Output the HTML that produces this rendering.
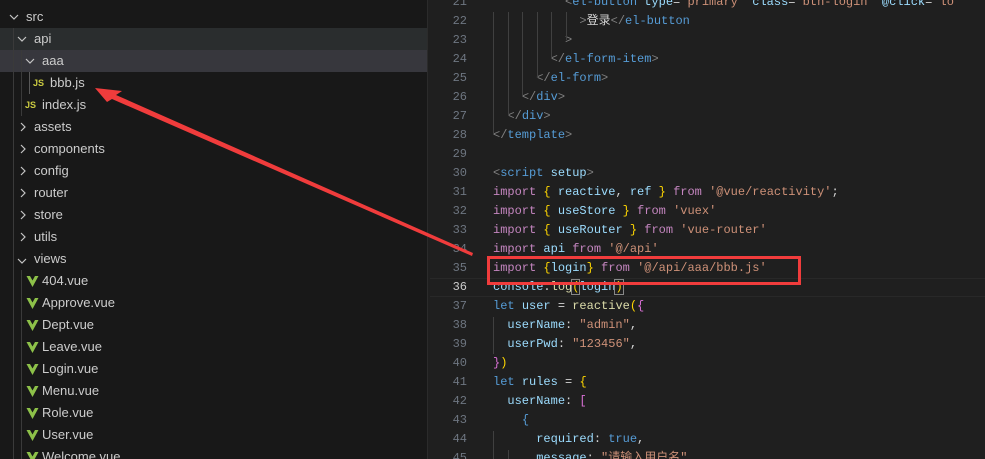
<!DOCTYPE html>
<html><head><meta charset="utf-8"><style>
*{margin:0;padding:0;box-sizing:border-box}
html,body{width:985px;height:459px;overflow:hidden}
body{background:#1f1f1f;position:relative;font-family:"Liberation Sans","Noto Sans CJK SC",sans-serif}
#side{position:absolute;left:0;top:0;width:428px;height:459px;background:#181818;border-right:1px solid #2b2b2b;overflow:hidden}
.r{position:absolute;left:0;width:427px;height:22px;line-height:22px;font-size:13px;color:#cccccc;white-space:nowrap}
.js{position:absolute;top:0;font-size:9px;font-weight:bold;color:#cbcb41}
.guide{position:absolute;width:1px;background:#3a3a3a}
#code{position:absolute;left:430px;top:-7px;width:555px;font-family:"Liberation Mono","Noto Sans CJK SC",monospace;font-size:12px}
.l{height:19px;line-height:19px;white-space:pre;position:relative;color:#d4d4d4}
.n{position:absolute;left:0;width:37px;text-align:right;color:#6e7681}
.t{position:absolute;left:63px}
.k{color:#c586c0}.b{color:#569cd6}.v{color:#9cdcfe}.s{color:#ce9178}.f{color:#dcdcaa}.y{color:#ffd700}.g{color:#808080}.p{color:#da70d6}
</style></head><body>
<div id="side">
<div class="r" style="top:6px"><span style="position:absolute;left:26px">src</span></div>
<div class="r" style="top:28px;background:#2a2d2e"><span style="position:absolute;left:34px">api</span></div>
<div class="r" style="top:50px;background:#37373d"><span style="position:absolute;left:42px">aaa</span></div>
<div class="r" style="top:72px"><span class="js" style="left:33px">JS</span><span style="position:absolute;left:50px">bbb.js</span></div>
<div class="r" style="top:94px"><span class="js" style="left:25px">JS</span><span style="position:absolute;left:42px">index.js</span></div>
<div class="r" style="top:116px"><span style="position:absolute;left:34px">assets</span></div>
<div class="r" style="top:138px"><span style="position:absolute;left:34px">components</span></div>
<div class="r" style="top:160px"><span style="position:absolute;left:34px">config</span></div>
<div class="r" style="top:182px"><span style="position:absolute;left:34px">router</span></div>
<div class="r" style="top:204px"><span style="position:absolute;left:34px">store</span></div>
<div class="r" style="top:226px"><span style="position:absolute;left:34px">utils</span></div>
<div class="r" style="top:248px"><span style="position:absolute;left:34px">views</span></div>
<div class="r" style="top:270px;left:42px">404.vue</div>
<div class="r" style="top:292px;left:42px">Approve.vue</div>
<div class="r" style="top:314px;left:42px">Dept.vue</div>
<div class="r" style="top:336px;left:42px">Leave.vue</div>
<div class="r" style="top:358px;left:42px">Login.vue</div>
<div class="r" style="top:380px;left:42px">Menu.vue</div>
<div class="r" style="top:402px;left:42px">Role.vue</div>
<div class="r" style="top:424px;left:42px">User.vue</div>
<div class="r" style="top:446px;left:42px">Welcome.vue</div>
<div class="guide" style="left:13px;top:28px;height:431px"></div>
<div class="guide" style="left:21px;top:50px;height:66px"></div>
<div class="guide" style="left:29px;top:72px;height:22px;background:#585858"></div>
<div class="guide" style="left:21px;top:270px;height:189px"></div>
<svg style="position:absolute;left:0;top:0" width="428" height="459">
<g fill="none" stroke="#c5c5c5" stroke-width="1.2">
<path d="M10 15l4 4 4-4"/><path d="M18 37l4 4 4-4"/><path d="M26 59l4 4 4-4"/><path d="M18 259l4 4 4-4"/>
<path d="M21 123l4 4-4 4"/><path d="M21 145l4 4-4 4"/><path d="M21 167l4 4-4 4"/><path d="M21 189l4 4-4 4"/><path d="M21 211l4 4-4 4"/><path d="M21 233l4 4-4 4"/>
</g>
<g fill="#8dc149">
<path id="v" d="M26.5 276h3.5l2.5 4.5 2.5-4.5h3.5l-6 11z"/>
<use href="#v" y="22"/><use href="#v" y="44"/><use href="#v" y="66"/><use href="#v" y="88"/><use href="#v" y="110"/><use href="#v" y="132"/><use href="#v" y="154"/><use href="#v" y="176"/>
</g>
</svg>
</div>
<div style="position:absolute;left:430px;top:278px;width:555px;height:19px;border-top:1px solid #282828;border-bottom:1px solid #282828"></div>
<div id="code">
<div class="l"><span class="n">21</span><span class="t">          <span class="g">&lt;</span><span class="b">el-button</span> <span class="v">type</span>=<span class="s">"primary"</span> <span class="v">class</span>=<span class="s">"btn-login"</span> <span class="v">@click</span>=<span class="s">"lo</span></span></div>
<div class="l"><span class="n">22</span><span class="t">            <span class="g">&gt;</span>登录<span class="g">&lt;/</span><span class="b">el-button</span></span></div>
<div class="l"><span class="n">23</span><span class="t">          <span class="g">&gt;</span></span></div>
<div class="l"><span class="n">24</span><span class="t">        <span class="g">&lt;/</span><span class="b">el-form-item</span><span class="g">&gt;</span></span></div>
<div class="l"><span class="n">25</span><span class="t">      <span class="g">&lt;/</span><span class="b">el-form</span><span class="g">&gt;</span></span></div>
<div class="l"><span class="n">26</span><span class="t">    <span class="g">&lt;/</span><span class="b">div</span><span class="g">&gt;</span></span></div>
<div class="l"><span class="n">27</span><span class="t">  <span class="g">&lt;/</span><span class="b">div</span><span class="g">&gt;</span></span></div>
<div class="l"><span class="n">28</span><span class="t"><span class="g">&lt;/</span><span class="b">template</span><span class="g">&gt;</span></span></div>
<div class="l"><span class="n">29</span></div>
<div class="l"><span class="n">30</span><span class="t"><span class="g">&lt;</span><span class="b">script</span> <span class="v">setup</span><span class="g">&gt;</span></span></div>
<div class="l"><span class="n">31</span><span class="t"><span class="k">import</span> <span class="y">{</span> <span class="v">reactive</span>, <span class="v">ref</span> <span class="y">}</span> <span class="k">from</span> <span class="s">'@vue/reactivity'</span>;</span></div>
<div class="l"><span class="n">32</span><span class="t"><span class="k">import</span> <span class="y">{</span> <span class="v">useStore</span> <span class="y">}</span> <span class="k">from</span> <span class="s">'vuex'</span></span></div>
<div class="l"><span class="n">33</span><span class="t"><span class="k">import</span> <span class="y">{</span> <span class="v">useRouter</span> <span class="y">}</span> <span class="k">from</span> <span class="s">'vue-router'</span></span></div>
<div class="l"><span class="n">34</span><span class="t"><span class="k">import</span> <span class="v">api</span> <span class="k">from</span> <span class="s">'@/api'</span></span></div>
<div class="l"><span class="n">35</span><span class="t"><span class="k">import</span> <span class="y">{</span><span class="v">login</span><span class="y">}</span> <span class="k">from</span> <span class="s">'@/api/aaa/bbb.js'</span></span></div>
<div class="l"><span class="n" style="color:#ccc">36</span><span class="t"><span class="v">console</span>.<span class="f">log</span><span class="y" style="outline:1px solid #888">(</span><span class="v">login</span><span class="y" style="outline:1px solid #888">)</span></span></div>
<div class="l"><span class="n">37</span><span class="t"><span class="b">let</span> <span class="v">user</span> = <span class="f">reactive</span><span class="y">(</span><span class="p">{</span></span></div>
<div class="l"><span class="n">38</span><span class="t">  <span class="v">userName</span>: <span class="s">"admin"</span>,</span></div>
<div class="l"><span class="n">39</span><span class="t">  <span class="v">userPwd</span>: <span class="s">"123456"</span>,</span></div>
<div class="l"><span class="n">40</span><span class="t"><span class="p">}</span><span class="y">)</span></span></div>
<div class="l"><span class="n">41</span><span class="t"><span class="b">let</span> <span class="v">rules</span> = <span class="y">{</span></span></div>
<div class="l"><span class="n">42</span><span class="t">  <span class="v">userName</span>: <span class="p">[</span></span></div>
<div class="l"><span class="n">43</span><span class="t">    <span class="b">{</span></span></div>
<div class="l"><span class="n">44</span><span class="t">      <span class="v">required</span>: <span class="b">true</span>,</span></div>
<div class="l"><span class="n">45</span><span class="t">      <span class="v">message</span>: <span class="s">"请输入用户名"</span></span></div>
</div>
<svg style="position:absolute;left:0;top:0" width="985" height="459">
<g stroke="#404040" stroke-width="1">
<line x1="493.5" y1="12" x2="493.5" y2="135"/><line x1="508.5" y1="12" x2="508.5" y2="116"/><line x1="522.5" y1="12" x2="522.5" y2="97"/><line x1="537.5" y1="12" x2="537.5" y2="78"/><line x1="551.5" y1="12" x2="551.5" y2="59"/><line x1="566.5" y1="12" x2="566.5" y2="40"/>
<line x1="493.5" y1="317" x2="493.5" y2="354"/><line x1="493.5" y1="431" x2="493.5" y2="459"/><line x1="508.5" y1="450" x2="508.5" y2="459"/>
</g>
<rect x="488.5" y="257.5" width="311" height="26" fill="none" stroke="#f03c3c" stroke-width="3"/>
<polygon points="95,88 122,91 116,95 473,253 472,256 112,99 107,102" fill="#f03c3c"/>
</svg>
</body></html>
